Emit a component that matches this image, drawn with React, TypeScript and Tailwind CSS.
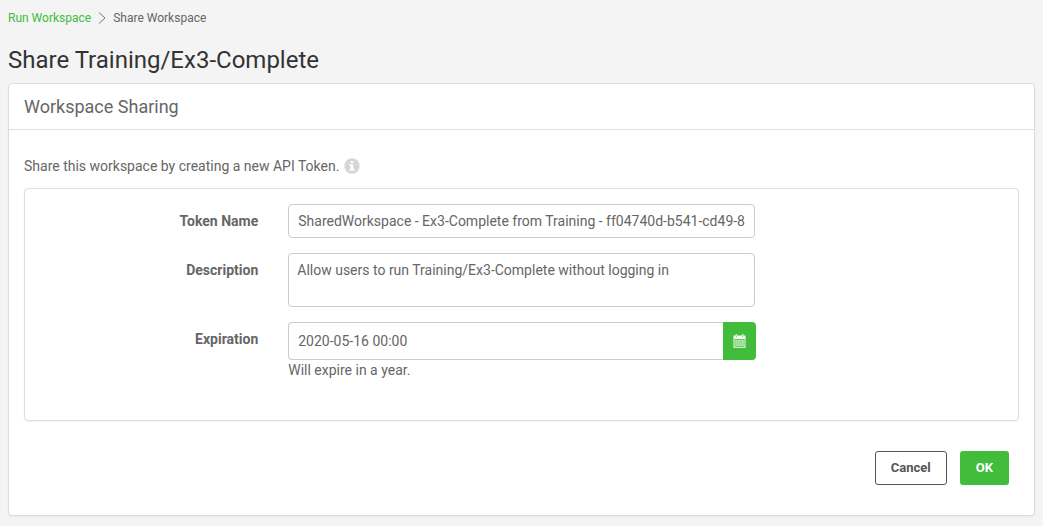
import { useState } from "react";
import type { ReactNode } from "react";

function InfoIcon() {
  return (
    <svg viewBox="0 0 16 16" className="size-4" role="img" aria-label="More information">
      <circle cx="8" cy="8" r="7.7" fill="#d6d6d6" />
      <path d="M6.7 3h2.6v2.1H6.7zM5.4 6.3h3.9v4.6h1.3v1.7H5.4v-1.7h1.3V8H5.4z" fill="#fff" />
    </svg>
  );
}

function CalendarIcon() {
  return (
    <svg viewBox="0 0 13 14" className="h-3.5 w-[13px]" aria-hidden="true">
      <path
        fillRule="evenodd"
        fill="#f4fff0"
        d="M2.6.2h1.600v1.200h4.600V.2h1.600v1.200h2.100v12.300H.500V1.400h2.100zM1.500 5v7.700h10V5z"
      />
      <path d="M2.200 5.700h8.600v6.300H2.200z" fill="#f4fff0" fillOpacity="0.7" />
      <path
        d="M4.400 5.700v6.300M6.500 5.700v6.300M8.600 5.700v6.300M2.200 7.800h8.600M2.200 9.900h8.600"
        stroke="#41bd3b"
        strokeOpacity="0.45"
        strokeWidth="0.6"
      />
      <path d="M3.400 1.500v1.600M9.600 1.500v1.600" stroke="#41bd3b" strokeWidth="0.7" />
    </svg>
  );
}

function FormRow({ id, label, children }: { id: string; label: string; children: ReactNode }) {
  return (
    <div className="grid grid-cols-4">
      <label htmlFor={id} className="px-[15px] pt-[7px] text-right font-bold">
        {label}
      </label>
      <div className="col-span-2 px-[15px]">{children}</div>
    </div>
  );
}

export default function App() {
  const [name, setName] = useState("SharedWorkspace - Ex3-Complete from Training - ff04740d-b541-cd49-8");
  const [description, setDescription] = useState("Allow users to run Training/Ex3-Complete without logging in");
  const [expiration, setExpiration] = useState("2020-05-16 00:00");

  return (
    <div className="min-h-screen bg-[#f4f4f4] px-2 pt-2 pb-2.5 font-[Roboto,sans-serif] text-sm leading-5 text-[#666]">
      <nav aria-label="Breadcrumb" className="flex items-center gap-[7px] text-xs leading-5">
        <a href="#run" className="text-[#41bd3b]">Run Workspace</a>
        <svg viewBox="0 0 8 12" className="h-3 w-2" aria-hidden="true">
          <path d="M1 .500 7 6 1 11.500" fill="none" stroke="#777" />
        </svg>
        <span>Share Workspace</span>
      </nav>

      <h1 className="mt-4 text-2xl leading-8 text-[#333]">Share Training/Ex3-Complete</h1>

      <main className="mt-[7px] rounded border border-[#ddd] bg-white shadow-xs">
        <h2 className="border-b border-[#ddd] px-[15px] pt-[11px] pb-2.5 text-lg leading-6">Workspace Sharing</h2>

        <form className="px-[15px] pt-[26px] pb-[30px]" onSubmit={(e) => e.preventDefault()}>
          <p className="flex items-center gap-[5px]">
            Share this workspace by creating a new API Token. <InfoIcon />
          </p>

          <section className="mt-3 flex flex-col gap-[15px] rounded border border-[#ddd] pt-[15px] pb-10 shadow-xs">
            <FormRow id="token-name" label="Token Name">
              <input
                id="token-name"
                value={name}
                onChange={(e) => setName(e.target.value)}
                className="block h-[34px] w-full rounded border border-[#ccc] bg-white px-[9px]"
              />
            </FormRow>
            <FormRow id="description" label="Description">
              <textarea
                id="description"
                value={description}
                onChange={(e) => setDescription(e.target.value)}
                className="block h-[54px] w-full resize-none rounded border border-[#ccc] bg-white px-2 py-1.5"
              />
            </FormRow>
            <FormRow id="expiration" label="Expiration">
              <div className="flex h-[38px]">
                <input
                  id="expiration"
                  value={expiration}
                  onChange={(e) => setExpiration(e.target.value)}
                  className="min-w-0 flex-1 rounded-l border border-r-0 border-[#ccc] bg-white px-[9px]"
                />
                <button
                  type="button"
                  aria-label="Choose date"
                  className="-mr-px flex w-[33px] items-center justify-center rounded-r bg-[#41bd3b]"
                >
                  <CalendarIcon />
                </button>
              </div>
              <p>Will expire in a year.</p>
            </FormRow>
          </section>

          <div className="mt-[30px] flex justify-end gap-[13px] pr-2.5 text-[13px] font-bold">
            <button type="button" className="h-[34px] rounded-[3px] border border-[#555] bg-white px-[15px] text-[#555]">
              Cancel
            </button>
            <button type="submit" className="h-[34px] rounded-[3px] bg-[#41bd3b] px-4 text-white">
              OK
            </button>
          </div>
        </form>
      </main>
    </div>
  );
}
